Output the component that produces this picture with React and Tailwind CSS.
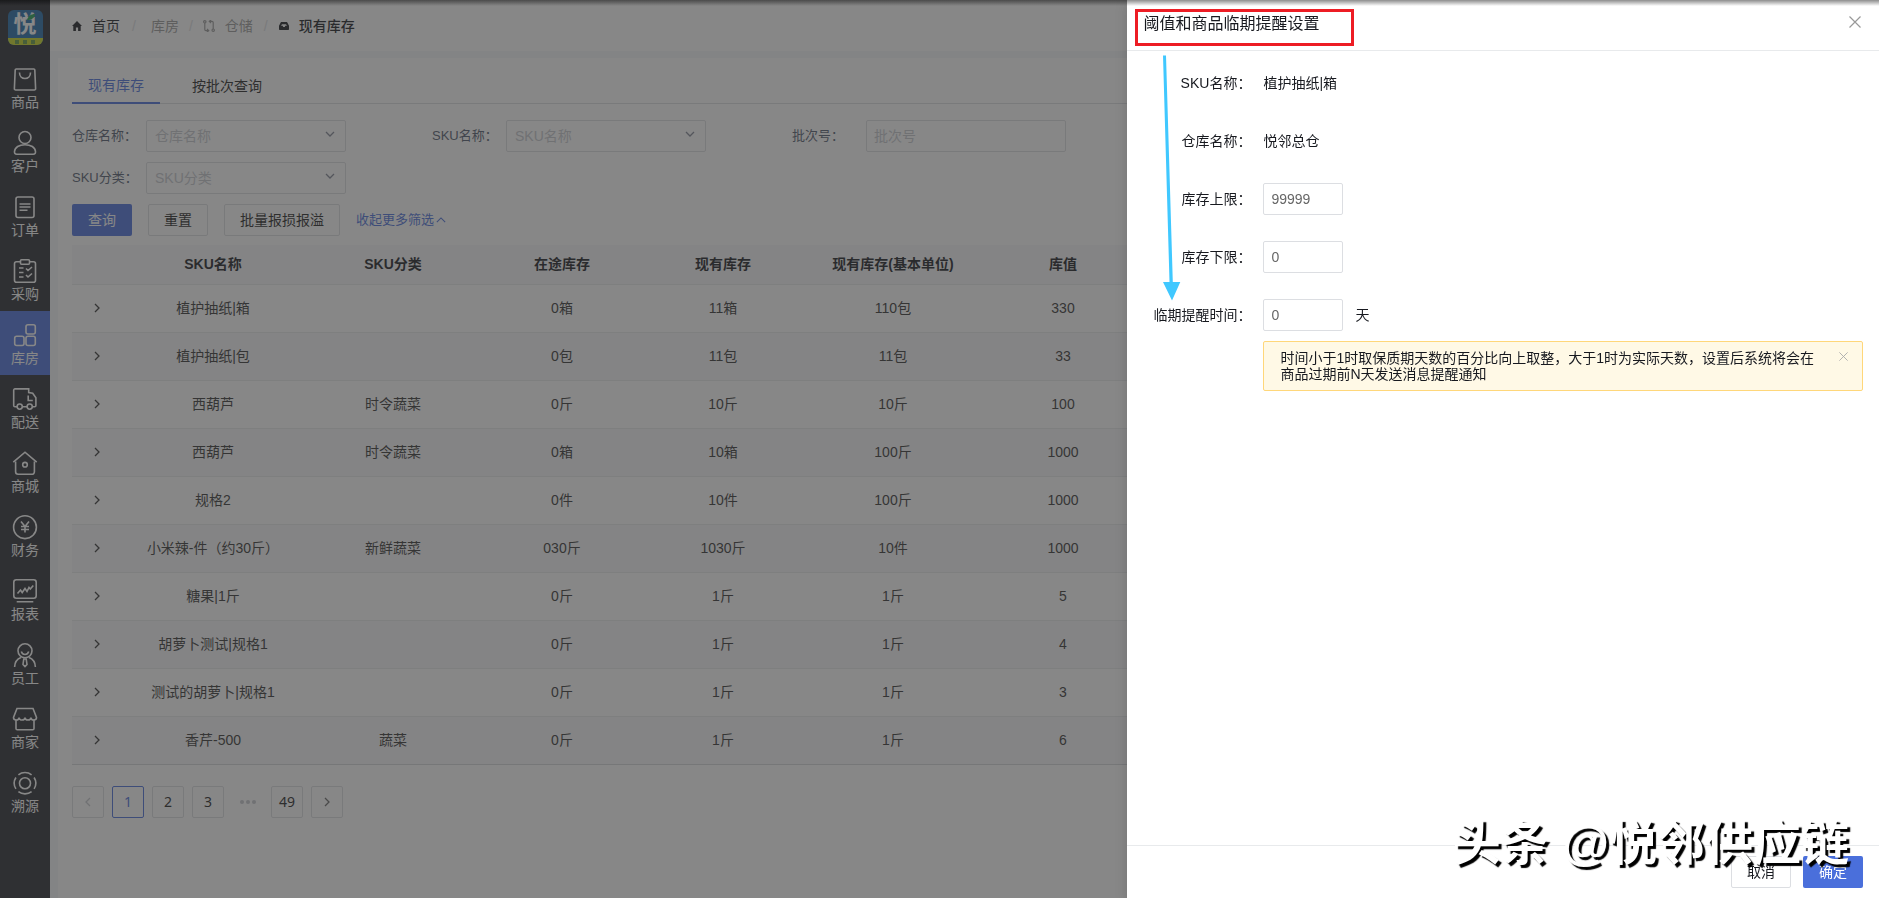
import React, { useState } from 'react';

const MENU = [
  {
    name: '商品',
    icon: (
      <>
        <path d="M3.2 2h17.6a1 1 0 0 1 1 .9l.8 18.6a1.3 1.3 0 0 1-1.3 1.5H2.7a1.3 1.3 0 0 1-1.3-1.5L2.2 2.9a1 1 0 0 1 1-.9z" />
        <path d="M6.5 5.5c0 3.6 2.4 6 5.5 6s5.5-2.4 5.5-6" />
      </>
    ),
  },
  {
    name: '客户',
    icon: (
      <>
        <circle cx="12" cy="6.5" r="6" />
        <path d="M1.5 20.5c.3-4.2 4.7-6.8 10.5-6.8s10.2 2.6 10.5 6.8c.1 1.8-.5 2.7-2.3 2.7H3.8c-1.8 0-2.4-.9-2.3-2.7z" />
      </>
    ),
  },
  {
    name: '订单',
    icon: (
      <>
        <rect x="3" y="2" width="18" height="20.5" rx="2" />
        <path d="M6.5 9h11M6.5 12h11M6.5 15.2h8" />
      </>
    ),
  },
  {
    name: '采购',
    icon: (
      <>
        <path d="M7.5 2.8h-4a2 2 0 0 0-2 2v16.5a2 2 0 0 0 2 2h17a2 2 0 0 0 2-2V4.8a2 2 0 0 0-2-2h-4" />
        <rect x="7.5" y=".8" width="9" height="4.5" rx="1" />
        <path d="M6 9h4.500M6 13.500h4.500M6 18h4.500M13 9.500l2 2 4-3.500M13 16l2 2 4-3.500" />
      </>
    ),
  },
  {
    name: '库房',
    icon: (
      <>
        <rect x="13" y="1.7" width="9.3" height="9.3" rx="2" />
        <rect x="1.7" y="13.2" width="9.3" height="9.3" rx="2" />
        <rect x="13" y="13.2" width="9.3" height="9.3" rx="2" />
      </>
    ),
  },
  {
    name: '配送',
    icon: (
      <>
        <path d="M4 19.7H2a1.3 1.3 0 0 1-1.3-1.3V3.2A1.3 1.3 0 0 1 2 1.9h13.7v3.6l4 .7 3.2 4.6v7.6a1.3 1.3 0 0 1-1.3 1.3h-2.1M9.5 19.7H14" />
        <path d="M15.2 8.5v5h4.6" />
        <circle cx="6.7" cy="19.6" r="2.6" />
        <circle cx="16.7" cy="19.6" r="2.6" />
      </>
    ),
  },
  {
    name: '商城',
    icon: (
      <>
        <path d="M.3 11.2 12 1.2l11.7 10" />
        <path d="M2.6 10.5v10.3a2.5 2.5 0 0 0 2.5 2.5h13.8a2.5 2.5 0 0 0 2.5-2.5V10.5" />
        <circle cx="12" cy="13.7" r="2.3" />
      </>
    ),
  },
  {
    name: '财务',
    icon: (
      <>
        <circle cx="12" cy="12.2" r="11.4" />
        <path d="m8 6.5 4 5 4-5M12 11.5v6M8 11.5h8M8 14.5h8" />
      </>
    ),
  },
  {
    name: '报表',
    icon: (
      <>
        <rect x=".8" y=".8" width="22.4" height="18.5" rx="2.5" />
        <path d="m4.5 14.5 3-3.500 1.700 2.500L12 9.500l2 3 2-4 1.300 1.500 3-3.500M3.700 22.800h16.600" />
      </>
    ),
  },
  {
    name: '员工',
    icon: (
      <>
        <circle cx="12" cy="7.8" r="7" />
        <path d="M8.3 8.5c.6 2 2 3 3.7 3s3.1-1 3.7-3" />
        <path d="M1.6 24c.2-4.5 2.7-8 6.4-9.4M22.4 24c-.2-4.5-2.7-8-6.4-9.4M10.8 16h2.4l.8 5.5-2 2-2-2z" />
      </>
    ),
  },
  {
    name: '商家',
    icon: (
      <>
        <path d="M4 1.5h16l3.5 9c0 1.6-1.2 2.5-2.7 2.5s-2.9-1-2.9-2.6c0 1.6-1.4 2.6-2.9 2.6s-3-1-3-2.6c0 1.6-1.5 2.6-3 2.6s-2.9-1-2.9-2.6C6.1 12 4.7 13 3.2 13S.5 12.1.5 10.5z" />
        <path d="M3 13v8.5a1.3 1.3 0 0 0 1.3 1.3h15.4a1.3 1.3 0 0 0 1.3-1.3V13" />
      </>
    ),
  },
  {
    name: '溯源',
    icon: (
      <>
        <circle cx="12" cy="12.2" r="5.5" />
        <path d="M2.9 17.9a10.7 10.7 0 0 1 0-11.4M5.4 3.8a10.7 10.7 0 0 1 13.2 0M21.1 6.5a10.7 10.7 0 0 1 0 11.4M18.6 20.6a10.7 10.7 0 0 1-13.2 0" />
      </>
    ),
  },
];

const COLUMNS = ['SKU名称', 'SKU分类', '在途库存', '现有库存', '现有库存(基本单位)', '库值'];

const ROWS = [
  ['植护抽纸|箱', '', '0箱', '11箱', '110包', '330'],
  ['植护抽纸|包', '', '0包', '11包', '11包', '33'],
  ['西葫芦', '时令蔬菜', '0斤', '10斤', '10斤', '100'],
  ['西葫芦', '时令蔬菜', '0箱', '10箱', '100斤', '1000'],
  ['规格2', '', '0件', '10件', '100斤', '1000'],
  ['小米辣-件（约30斤）', '新鲜蔬菜', '030斤', '1030斤', '10件', '1000'],
  ['糖果|1斤', '', '0斤', '1斤', '1斤', '5'],
  ['胡萝卜测试|规格1', '', '0斤', '1斤', '1斤', '4'],
  ['测试的胡萝卜|规格1', '', '0斤', '1斤', '1斤', '3'],
  ['香芹-500', '蔬菜', '0斤', '1斤', '1斤', '6'],
];

function Chevron({ className, d = 'm2 4 4 4 4-4' }) {
  return (
    <svg viewBox="0 0 12 12" className={className} fill="none" stroke="currentColor" strokeWidth="1.3">
      <path d={d} />
    </svg>
  );
}

function Cross({ className }) {
  return (
    <svg viewBox="0 0 12 12" className={className} fill="none" stroke="currentColor" strokeWidth="1.2">
      <path d="m.5.5 11 11M11.5.5l-11 11" />
    </svg>
  );
}

function Logo() {
  return (
    <div className="mt-[10px] mb-[10px] flex h-[35px] w-[35px] shrink-0 flex-col overflow-hidden rounded-md bg-[#1f6aa8]">
      <div className="relative flex h-7 items-center justify-center text-[23px] leading-7 font-bold text-white">
        悦
        <svg viewBox="0 0 8 6" className="absolute top-1 right-2 h-[6px] w-2" fill="#20a050">
          <path d="M0 6C1 2 4 0 8 0 8 4 4 6 0 6z" />
        </svg>
      </div>
      <div className="flex h-[7px] items-center justify-center gap-1 bg-[#c8d820]">
        <span className="h-1 w-1 bg-[#5f9a40]" />
        <span className="h-1 w-1 bg-[#5f9a40]" />
        <span className="h-1 w-1 bg-[#5f9a40]" />
      </div>
    </div>
  );
}

function Sidebar() {
  return (
    <nav className="flex w-[50px] shrink-0 flex-col items-center bg-[#25272e]">
      <Logo />
      {MENU.map((item) => (
        <a
          key={item.name}
          href="#"
          className={`flex h-16 w-full flex-col items-center gap-px pt-3 text-sm leading-5 text-white ${
            item.name === '库房' ? 'bg-[#4a6fdb]' : ''
          }`}
        >
          <svg viewBox="0 0 24 24" className="h-6 w-6 shrink-0 overflow-visible" fill="none" stroke="currentColor" strokeWidth="1.6">
            {item.icon}
          </svg>
          {item.name}
        </a>
      ))}
    </nav>
  );
}

function Breadcrumb() {
  return (
    <header className="flex h-[51px] shrink-0 items-center bg-white px-[22px] text-sm text-[#999]">
      <a href="#" className="flex items-center gap-[10px] text-[#17191f]">
        <svg viewBox="0 0 10 10" className="h-[10px] w-[10px]" fill="currentColor">
          <path d="M5 0 0 5h1.3v5h2.6V6.6h2.2V10h2.6V5H10z" />
        </svg>
        首页
      </a>
      <span className="mx-3 text-[#dcdee2]">/</span>
      <span className="ml-[3px]">库房</span>
      <span className="mx-[10px] text-[#dcdee2]">/</span>
      <span className="flex items-center gap-[10px]">
        <svg viewBox="0 0 12 12" className="h-3 w-3" fill="none" stroke="currentColor" strokeWidth="1.2">
          <circle cx="1.8" cy="1.8" r="1.2" />
          <circle cx="10.2" cy="10.2" r="1.2" />
          <path d="M1.8 3v6.500c0 .8.4 1.2 1.2 1.2h2.5M4 9l1.700 1.700L4 12M10.200 9V2.500c0-.8-.4-1.200-1.200-1.200H6.500M8 0 6.300 1.300 8 3" />
        </svg>
        仓储
      </span>
      <span className="mx-[11px] text-[#dcdee2]">/</span>
      <span className="flex items-center gap-[10px] font-medium text-[#17191f]">
        <svg viewBox="0 0 10 8" className="h-2 w-[10px]" fill="currentColor" fillRule="evenodd">
          <path d="M2 0h6l2 3.8V7c0 .6-.4 1-1 1H1c-.6 0-1-.4-1-1V3.8zM3 2.2 2 3.8h1.700L4.200 5h1.600l.5-1.200H8L7 2.200z" />
        </svg>
        现有库存
      </span>
    </header>
  );
}

function FilterSelect({ id, label }) {
  return (
    <div className="flex h-8 w-[360px] items-center">
      <label htmlFor={id} className="w-[74px] text-[13px] text-[#515a6e]">{label}：</label>
      <div className="relative w-[200px]">
        <select
          id={id}
          defaultValue=""
          className="h-8 w-full appearance-none rounded-xs border border-[#dcdee2] bg-white pl-2 text-sm text-[#c5c8ce]"
        >
          <option value="">{label}</option>
        </select>
        <Chevron className="pointer-events-none absolute top-2 right-[10px] h-3 w-3 text-[#808695]" />
      </div>
    </div>
  );
}

function Filters() {
  return (
    <form className="pt-4">
      <div className="flex flex-wrap gap-y-[10px]">
        <FilterSelect id="warehouse" label="仓库名称" />
        <FilterSelect id="sku" label="SKU名称" />
        <div className="flex h-8 w-[360px] items-center">
          <label htmlFor="batch" className="w-[74px] text-[13px] text-[#515a6e]">批次号：</label>
          <input
            id="batch"
            placeholder="批次号"
            className="h-8 w-[200px] rounded-xs border border-[#dcdee2] bg-white px-[7px] text-sm placeholder:text-[#c5c8ce]"
          />
        </div>
        <div className="w-full">
          <FilterSelect id="category" label="SKU分类" />
        </div>
      </div>
      <div className="mt-[10px] flex items-center gap-4 text-sm text-[#222]">
        <button type="button" className="h-8 w-[60px] rounded-xs bg-[#4a6fdb] text-white">查询</button>
        <button type="button" className="h-8 w-[60px] rounded-xs border border-[#dcdee2]">重置</button>
        <button type="button" className="h-8 rounded-xs border border-[#dcdee2] px-[15px]">批量报损报溢</button>
        <button type="button" className="flex items-center gap-[2px] text-[13px] text-[#4a6fdb]">
          收起更多筛选
          <Chevron className="h-[10px] w-[10px]" d="m1 8.5 5-5 5 5" />
        </button>
      </div>
    </form>
  );
}

function StockTable() {
  return (
    <table className="mt-[9px] w-full table-fixed border-collapse text-center text-sm text-[#333]">
      <colgroup>
        <col className="w-[50px]" />
        <col className="w-[182px]" />
        <col className="w-[178px]" />
        <col className="w-[160px]" />
        <col className="w-[162px]" />
        <col className="w-[178px]" />
        <col className="w-[162px]" />
        <col />
      </colgroup>
      <thead>
        <tr className="h-[39px] border-b border-[#e8eaec] bg-[#f8f8f9] text-[#17191f]">
          <th />
          {COLUMNS.map((col) => (
            <th key={col} className="font-bold">{col}</th>
          ))}
          <th />
        </tr>
      </thead>
      <tbody>
        {ROWS.map((row, i) => (
          <tr key={i} className="h-12 border-b border-[#e8eaec] even:bg-[#f8f8f9] last:border-[#d4d6da]">
            <td>
              <button type="button" aria-label="展开" className="block w-full">
                <Chevron className="mx-auto h-3 w-3" d="m4 2 4 4-4 4" />
              </button>
            </td>
            {row.map((cell, j) => (
              <td key={j}>{cell}</td>
            ))}
            <td />
          </tr>
        ))}
      </tbody>
    </table>
  );
}

function Pagination() {
  const box = 'flex h-8 w-8 items-center justify-center rounded-xs border';
  return (
    <div className="mt-[21px] flex gap-2 font-['Noto_Sans'] text-sm text-[#222]">
      <button type="button" aria-label="上一页" className={`${box} border-[#dcdee2] text-[#c5c8ce]`}>
        <Chevron className="h-3 w-3" d="m8 2-4 4 4 4" />
      </button>
      <button type="button" className={`${box} border-[#4a6fdb] text-[#4a6fdb]`}>1</button>
      <button type="button" className={`${box} border-[#dcdee2]`}>2</button>
      <button type="button" className={`${box} border-[#dcdee2]`}>3</button>
      <span className="flex h-8 w-[31px] items-center justify-center gap-[2px]">
        <i className="h-1 w-1 rounded-full bg-[#c5c8ce]" />
        <i className="h-1 w-1 rounded-full bg-[#c5c8ce]" />
        <i className="h-1 w-1 rounded-full bg-[#c5c8ce]" />
      </span>
      <button type="button" className={`${box} border-[#dcdee2]`}>49</button>
      <button type="button" aria-label="下一页" className={`${box} border-[#dcdee2] text-[#666]`}>
        <Chevron className="h-3 w-3" d="m4 2 4 4-4 4" />
      </button>
    </div>
  );
}

function FormRow({ id, label, children }) {
  return (
    <div className="mb-[26px] flex min-h-8 items-center">
      <label htmlFor={id} className="w-[120px] shrink-0 pr-3 text-right">{label}：</label>
      {children}
    </div>
  );
}

function NumberField({ id, value, onChange }) {
  return (
    <input
      id={id}
      value={value}
      onChange={(e) => onChange(e.target.value)}
      className="h-8 w-20 rounded-xs border border-[#dcdee2] px-[7px] text-sm text-[#666]"
    />
  );
}

function SettingsDrawer() {
  const [upper, setUpper] = useState('99999');
  const [lower, setLower] = useState('0');
  const [days, setDays] = useState('0');
  const [showTip, setShowTip] = useState(true);

  return (
    <aside className="fixed inset-y-0 right-0 flex w-[40%] flex-col bg-white text-sm text-[#17191f] shadow-[0_4px_12px_rgba(0,0,0,0.15)]">
      <div className="flex h-[51px] shrink-0 items-start justify-between border-b border-[#e8eaec] px-4 pt-[14px]">
        <h2 className="text-base leading-5">阈值和商品临期提醒设置</h2>
        <button type="button" aria-label="关闭" className="mt-[2px] mr-[2px] text-[#999]">
          <Cross className="h-3 w-3" />
        </button>
      </div>

      <form className="flex-1 px-4 pt-4">
        <FormRow label="SKU名称">植护抽纸|箱</FormRow>
        <FormRow label="仓库名称">悦邻总仓</FormRow>
        <FormRow id="upper" label="库存上限">
          <NumberField id="upper" value={upper} onChange={setUpper} />
        </FormRow>
        <FormRow id="lower" label="库存下限">
          <NumberField id="lower" value={lower} onChange={setLower} />
        </FormRow>
        <div className="flex min-h-8 items-center">
          <label htmlFor="days" className="w-[120px] shrink-0 pr-3 text-right">临期提醒时间：</label>
          <NumberField id="days" value={days} onChange={setDays} />
          <span className="ml-3">天</span>
        </div>
        {showTip && (
          <div className="mt-[10px] ml-[120px] flex items-start rounded-xs border border-[#ffd77a] bg-[#fff9e6] py-2 pr-[14px] pl-4 leading-4">
            <p className="flex-1 pr-6">
              时间小于1时取保质期天数的百分比向上取整，大于1时为实际天数，设置后系统将会在商品过期前N天发送消息提醒通知
            </p>
            <button type="button" aria-label="关闭提示" className="mt-[2px] text-[#aaa]" onClick={() => setShowTip(false)}>
              <Cross className="h-[9px] w-[9px]" />
            </button>
          </div>
        )}
      </form>

      <div className="flex justify-end gap-3 border-t border-[#e8eaec] px-4 py-[10px]">
        <button type="button" className="h-8 w-[60px] rounded-xs border border-[#dcdee2]">取消</button>
        <button type="button" className="h-8 w-[60px] rounded-xs bg-[#4a6fdb] text-white">确定</button>
      </div>

      {/* callout marks over the drawer */}
      <div className="absolute top-[9px] left-2 h-[37px] w-[219px] border-3 border-[#ed1c24]" />
      <svg viewBox="0 0 20 246" className="absolute top-[55px] left-[35px] h-[246px] w-5" fill="#40c8ff">
        <path d="M1 .5h3L10.800 227h7.500L10 245.500 1 227h6.500z" />
      </svg>
      <div className="pointer-events-none absolute right-[30px] bottom-[19px] text-[48px] leading-[70px] font-bold whitespace-nowrap text-white [text-shadow:3px_3px_1px_#000]">
        头条 @悦邻供应链
      </div>
    </aside>
  );
}

function App() {
  return (
    <div className="flex min-h-screen bg-[#f5f7f9] font-['Liberation_Sans','Noto_Sans_CJK_SC',sans-serif]">
      <Sidebar />
      <div className="flex min-w-0 flex-1 flex-col">
        <Breadcrumb />
        <main className="mt-[7px] ml-2 flex-1 bg-white px-[14px]">
          <div className="flex h-[46px] border-b border-[#dcdee2] pt-[10px] text-sm">
            <button type="button" className="-mb-px h-9 border-b-2 border-[#4a6fdb] px-4 text-[#4a6fdb]">现有库存</button>
            <button type="button" className="h-9 px-8 text-[#222]">按批次查询</button>
          </div>
          <Filters />
          <StockTable />
          <Pagination />
        </main>
      </div>
      <div className="fixed inset-0 bg-[rgba(55,55,55,0.6)]" />
      <SettingsDrawer />
      <div className="pointer-events-none fixed inset-x-0 top-0 h-[6px] bg-linear-to-b from-black/45 to-transparent" />
    </div>
  );
}

export default App;
